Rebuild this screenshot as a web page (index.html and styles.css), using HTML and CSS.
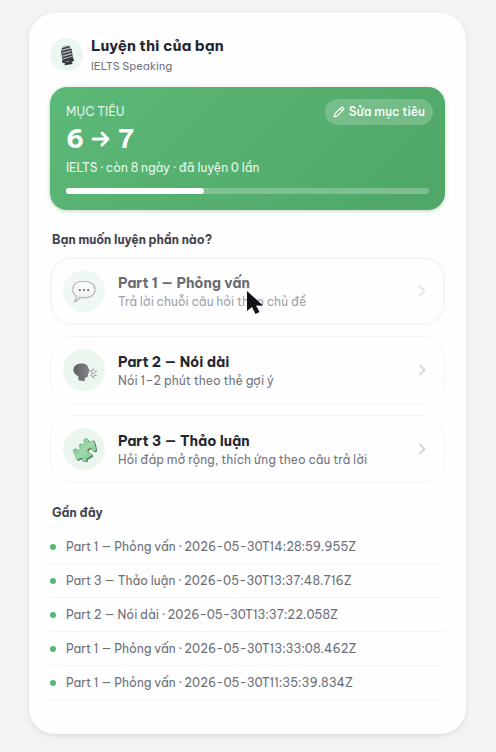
FILE: index.html
```html
<!DOCTYPE html>
<html lang="vi">
<head>
<meta charset="utf-8">
<meta name="viewport" content="width=device-width, initial-scale=1">
<title>Luyện thi của bạn</title>
<link rel="stylesheet" href="styles.css">
</head>
<body>
<main class="panel">
  <header class="head">
    <span class="avatar">
      <svg class="mic" viewBox="0 0 24 28" aria-hidden="true">
        <g transform="rotate(-9 12 14)">
          <path d="M6 8Q6 3 12 3T18 8V22H6Z" fill="#b9bbc0"/>
          <path d="M7 6.500l10-1.500M6 10l12-1.500M6 13.500l12-1.500M6 17l12-1.500M6 20l12-1.500" stroke="#3c3e45" stroke-width="1.900"/>
          <path d="M6 8v14M18 8v14" stroke="#55575e" stroke-width="1.200"/>
          <path d="M5 20.500l14-1v3.500l-3 1 1 2.500H7l1-2.500-3-1z" fill="#303238"/>
          <path d="M8 22.500h7" stroke="#8b8d93" stroke-width="1"/>
        </g>
      </svg>
    </span>
    <div>
      <h1 class="title">Luyện thi của bạn</h1>
      <p class="subtitle">IELTS Speaking</p>
    </div>
  </header>

  <section class="goal">
    <div class="goal-top">
      <div>
        <p class="goal-label">MỤC TIÊU</p>
        <p class="goal-score">6
          <svg class="arrow" viewBox="0 0 20 20" aria-hidden="true"><path d="M2 10h15M11 4l6 6-6 6"/></svg>
          7</p>
      </div>
      <button class="edit" type="button">
        <svg class="pencil" viewBox="0 0 12 12" aria-hidden="true"><path d="M1.200 10.800L2 7.600 8.300 1.400Q9.200.700 10.200 1.600T10.500 3.600L4.300 9.900ZM7.200 2.500l2.200 2.200"/></svg>
        Sửa mục tiêu
      </button>
    </div>
    <p class="goal-info">IELTS · còn 8 ngày · đã luyện 0 lần</p>
    <div class="track"><div class="fill"></div></div>
  </section>

  <h2 class="section-title">Bạn muốn luyện phần nào?</h2>
  <div class="parts">
    <button class="part pressed" type="button">
      <span class="icon">
        <svg viewBox="0 0 28 28" aria-hidden="true">
          <defs><linearGradient id="bubble" x2="0" y2="1"><stop stop-color="#fff"/><stop offset=".65" stop-color="#f1f1f4"/><stop offset="1" stop-color="#b4b4ba"/></linearGradient></defs>
          <path d="M14 3.500C21 3.500 26 7 26 12.500S21 21.500 14 21.500q-2.500 0-4.500-.5Q7.500 25 3.500 25.500q2.500-2.500 2-6Q2 17 2 12.500 2 3.500 14 3.500Z" fill="url(#bubble)" stroke="#95959b" stroke-width="1.200"/>
          <g fill="#303035"><circle cx="9.500" cy="13" r="1.200"/><circle cx="14" cy="13" r="1.200"/><circle cx="18.500" cy="13" r="1.200"/></g>
        </svg>
      </span>
      <span class="text"><span class="name">Part 1 — Phỏng vấn</span><span class="desc">Trả lời chuỗi câu hỏi theo chủ đề</span></span>
      <svg class="chevron" viewBox="0 0 10 14" aria-hidden="true"><path d="M3 2.500L7.500 7 3 11.500"/></svg>
      <svg class="pointer" viewBox="0 0 18 26" aria-hidden="true"><path d="M1 1v20l5-4 3.500 7 4-2-3.500-6.500h7Z"/></svg>
    </button>
    <button class="part" type="button">
      <span class="icon">
        <svg viewBox="0 0 28 28" aria-hidden="true">
          <defs><linearGradient id="face" x2="1" y2="0"><stop stop-color="#5e5e63"/><stop offset="1" stop-color="#858589"/></linearGradient></defs>
          <path d="M10.500 7Q18 6.500 19 12.500l1.500 2.500-1.500.8.300 1.700-1.200 1 .2 2.200q-.3 1.500-3 1.500L14.500 26 8 25v-4Q2.500 18 2.500 13.500 3.500 7.500 10.500 7Z" fill="url(#face)"/>
          <path d="M21.500 15.500l3-2.500M22 17.500h2.500M21.500 19.500l3.500 3M26 16l1-.5M25.500 19.500l1.500.5" stroke="#919196" stroke-width="1.200" stroke-linecap="round"/>
        </svg>
      </span>
      <span class="text"><span class="name">Part 2 — Nói dài</span><span class="desc">Nói 1–2 phút theo thẻ gợi ý</span></span>
      <svg class="chevron" viewBox="0 0 10 14" aria-hidden="true"><path d="M3 2.500L7.500 7 3 11.500"/></svg>
    </button>
    <button class="part" type="button">
      <span class="icon">
        <svg viewBox="0 0 28 28" aria-hidden="true">
          <defs>
            <linearGradient id="jig" x2="1" y2="1"><stop stop-color="#6fc583"/><stop offset=".5" stop-color="#a0d9aa"/><stop offset="1" stop-color="#71c083"/></linearGradient>
            <path id="piece" d="M9.500 8.500l3 .5c2 .2 2.500-1 1.700-2.500C12.500 3.500 17 1 18.500 4c.7 1.500.3 3 2 2.500L24.500 4.500 26 9c.5 1.500-.2 2.200 1 3.500 2 2.500-1.500 5.500-3.500 3.300-1.200-1.300-.8-2.800-2.800-2.600-3 .3-3.700 3.300-1.700 4.800 1.300 1 2.700.2 3.300 1.500l.7 1.500-4 2.500c-1.500 1-2.500.5-2 2 .7 3-4 3.500-4.500.8-.3-1.500.5-2.800-1.500-2.300L6.500 26 4.500 21c-.5-1.500.3-2-.8-2.700-2.700-1.500-1.200-5 1.500-4.500 1.500.3 1.800 1.800 3.300 1.500 2-.5 1.500-2.800.5-4Z"/>
          </defs>
          <use href="#piece" x="1" y="1" fill="#4e6a55"/>
          <use href="#piece" fill="url(#jig)" stroke="#5a9569" stroke-width=".5"/>
        </svg>
      </span>
      <span class="text"><span class="name">Part 3 — Thảo luận</span><span class="desc">Hỏi đáp mở rộng, thích ứng theo câu trả lời</span></span>
      <svg class="chevron" viewBox="0 0 10 14" aria-hidden="true"><path d="M3 2.500L7.500 7 3 11.500"/></svg>
    </button>
  </div>

  <h2 class="section-title">Gần đây</h2>
  <ul class="recent">
    <li>Part 1 — Phỏng vấn · 2026-05-30T14:28:59.955Z</li>
    <li>Part 3 — Thảo luận · 2026-05-30T13:37:48.716Z</li>
    <li>Part 2 — Nói dài · 2026-05-30T13:37:22.058Z</li>
    <li>Part 1 — Phỏng vấn · 2026-05-30T13:33:08.462Z</li>
    <li>Part 1 — Phỏng vấn · 2026-05-30T11:35:39.834Z</li>
  </ul>
</main>
</body>
</html>
```
FILE: styles.css
```css
* { box-sizing: border-box; }
body {
  margin: 0;
  padding: 13px 30px 18px 29px;
  background: #f3f3f5;
  color: #24262f;
  font-family: "Be Vietnam Pro", Inter, "Noto Sans", sans-serif;
  font-size: 12px;
  line-height: 20px;
}
h1, h2, p, ul { margin: 0; padding: 0; }
button { font: inherit; color: inherit; border: 0; cursor: pointer; }
.panel {
  padding: 21px 21px 34px;
  background: #fefefe;
  border-radius: 26px;
  box-shadow: 0 2px 5px rgba(30, 35, 45, .1);
}
.head { display: flex; align-items: center; gap: 8px; }
.avatar {
  display: flex;
  align-items: center;
  justify-content: center;
  width: 33px;
  height: 33px;
  border-radius: 50%;
  background: #eaf6ee;
}
.mic { width: 20px; height: 23px; }
.title { font-size: 15px; line-height: 23px; font-weight: 700; }
.subtitle { font-size: 11px; line-height: 18px; color: #73767e; }

.goal {
  margin-top: 12px;
  padding: 12px 16px 16px;
  border-radius: 17px;
  color: #fff;
  background: linear-gradient(135deg, #5cb978, #4fa667);
  box-shadow: 0 1px 4px rgba(50, 110, 70, .3);
}
.goal-top { display: flex; justify-content: space-between; align-items: flex-start; }
.goal-label { line-height: 26px; color: #e2f4e7; }
.goal-score { display: flex; align-items: center; gap: 7px; font-size: 26px; line-height: 28px; font-weight: 700; }
.arrow { width: 20px; height: 20px; fill: none; stroke: #fff; stroke-width: 3; stroke-linecap: round; stroke-linejoin: round; }
.edit {
  display: flex;
  align-items: center;
  gap: 4px;
  height: 26px;
  margin-right: -4px;
  padding: 0 8px;
  border-radius: 13px;
  background: rgba(255, 255, 255, .2);
  color: #fff;
  font-weight: 500;
}
.pencil { width: 12px; height: 12px; fill: none; stroke: #fff; stroke-width: 1.2; stroke-linejoin: round; }
.goal-info { margin-top: 5px; line-height: 20px; color: #e9f7ed; }
.track { height: 6px; margin-top: 10px; border-radius: 3px; background: rgba(255, 255, 255, .25); }
.fill { width: 38%; height: 100%; border-radius: 3px; background: #fff; }

.section-title { margin: 20px 2px 7px; font-size: 12px; line-height: 20px; font-weight: 700; color: #42444d; }
.parts { display: grid; gap: 11px; }
.part {
  position: relative;
  display: flex;
  align-items: center;
  gap: 13px;
  width: 100%;
  height: 68px;
  padding: 0 17px 0 12px;
  border: 1px solid #f4f5f6;
  border-radius: 22px;
  background: #fefefe;
  text-align: left;
}
.pressed { border: 2px solid #f4f6f6; padding: 0 16px 0 11px; }
.pressed .icon, .pressed .text { opacity: .68; }
.pressed .chevron { opacity: .6; }
.icon {
  display: flex;
  align-items: center;
  justify-content: center;
  width: 42px;
  height: 42px;
  border-radius: 50%;
  background: #eaf6ee;
}
.icon svg { width: 26px; height: 26px; }
.text { flex: 1; padding-top: 1px; }
.name, .desc { display: block; }
.name { font-size: 14px; line-height: 20px; font-weight: 700; }
.desc { line-height: 18px; color: #73767e; }
.chevron { width: 10px; height: 14px; fill: none; stroke: #d5d7da; stroke-width: 2; stroke-linecap: round; stroke-linejoin: round; }
.pointer { position: absolute; left: 194px; top: 31px; width: 18px; height: 26px; fill: #111318; }

.recent { list-style: none; }
.recent li {
  display: flex;
  align-items: center;
  gap: 10px;
  height: 34px;
  border-bottom: 1px solid #f2f3f4;
  color: #6c6f78;
}
.recent li::before { content: ""; width: 6px; height: 6px; border-radius: 50%; background: #57b773; }
```
